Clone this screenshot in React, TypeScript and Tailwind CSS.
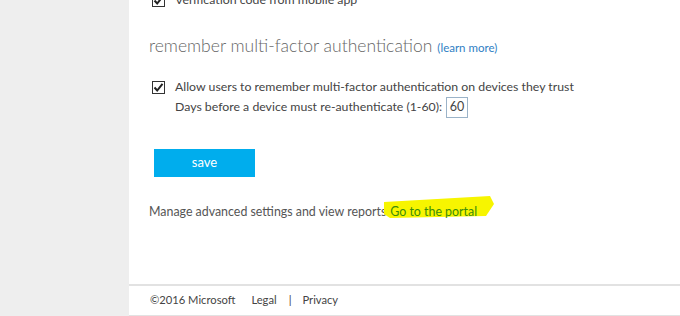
export default function App() {
  return (
    <div
      className="flex h-[316px] w-[680px] overflow-hidden bg-white text-[#444]"
      style={{ fontFamily: 'Lato, "Open Sans", sans-serif' }}
    >
      <div className="w-[129px] shrink-0 bg-[#eeeeee]" />
      <div className="flex flex-1 flex-col">
        <div className="relative flex-1 pl-[20px]">
          {/* cut off option from the block above */}
          <div className="-mt-[9px] flex items-center gap-[10px] pl-[3px] text-[12.3px]">
            <Check />
            <span>Verification code from mobile app</span>
          </div>

          <h2 className="mt-[24px] flex items-baseline gap-[5px] text-[17.5px] font-light text-[#666]">
            remember multi-factor authentication
            <a className="text-[11.5px] font-normal text-[#2f80c4]">(learn more)</a>
          </h2>

          <div className="mt-[18px] flex gap-[10px] pl-[3px] text-[12.3px]">
            <div className="pt-[3px]">
              <Check />
            </div>
            <div>
              <div className="leading-[18px]">
                Allow users to remember multi-factor authentication on devices they trust
              </div>
              <div className="mt-[1px] flex items-center gap-[4px] leading-[18px]">
                Days before a device must re-authenticate (1-60):
                <span className="flex h-[21px] w-[22px] items-center justify-center border border-[#9bb3c8] text-[12.5px]">
                  60
                </span>
              </div>
            </div>
          </div>

          <button className="ml-[5px] mt-[31px] flex h-[28px] w-[101px] items-center justify-center bg-[#00aded] text-[13px] text-white">
            save
          </button>

          <div className="mt-[26px] flex items-center text-[12.4px] text-[#555]">
            Manage advanced settings and view reports
            <span className="relative ml-[4px]">
              <svg
                className="absolute left-[-6px] top-[-7px]"
                width="112"
                height="26"
                viewBox="0 0 112 26"
              >
                <polygon points="0,6 106,0 110,8 102,20 6,22 0,18" fill="#f7f500" />
              </svg>
              <a className="relative text-[#3b8c0a]">Go to the portal</a>
            </span>
          </div>
        </div>

        <footer className="flex h-[32px] items-center border-t-[2px] border-b border-[#e2e2e2] pl-[21px] text-[11.2px] text-[#444]">
          <span>©2016 Microsoft</span>
          <span className="ml-[16px]">Legal</span>
          <span className="ml-[12px]">|</span>
          <span className="ml-[11px]">Privacy</span>
        </footer>
      </div>
    </div>
  );
}

function Check() {
  return (
    <svg width="13" height="13" viewBox="0 0 13 13" className="block">
      <rect x="0.5" y="0.5" width="12" height="12" fill="white" stroke="#333" />
      <path d="M2.5 6.5 L5.2 9.5 L10.5 2.8" fill="none" stroke="#222" strokeWidth="2" />
    </svg>
  );
}
